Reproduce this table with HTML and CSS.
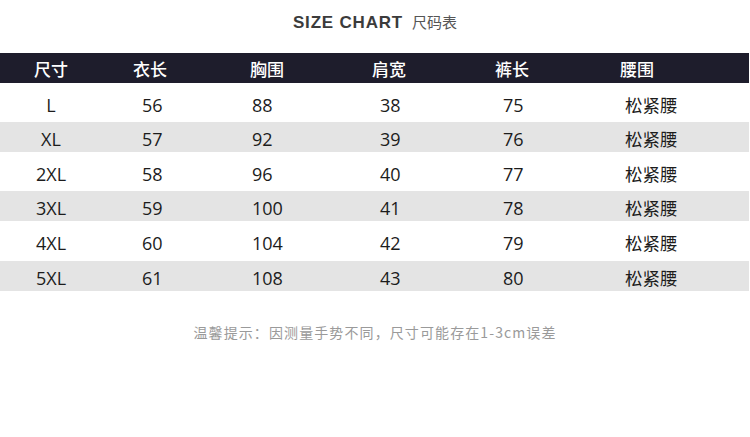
FILE: index.html
```html
<!DOCTYPE html>
<html lang="zh">
<head>
<meta charset="utf-8">
<link rel="stylesheet" href="styles.css">
</head>
<body>
<div class="page">
  <h1 class="title"><span class="title-en">SIZE CHART</span><span class="title-cn">尺码表</span></h1>
  <div class="chart">
    <div class="row head">
      <div class="c c1">尺寸</div><div class="c c2">衣长</div><div class="c c3">胸围</div><div class="c c4">肩宽</div><div class="c c5">裤长</div><div class="c c6">腰围</div>
    </div>
    <div class="row tall">
      <div class="c c1">L</div><div class="c c2">56</div><div class="c c3">88</div><div class="c c4">38</div><div class="c c5">75</div><div class="c c6">松紧腰</div>
    </div>
    <div class="row alt">
      <div class="c c1">XL</div><div class="c c2">57</div><div class="c c3">92</div><div class="c c4">39</div><div class="c c5">76</div><div class="c c6">松紧腰</div>
    </div>
    <div class="row tall">
      <div class="c c1">2XL</div><div class="c c2">58</div><div class="c c3">96</div><div class="c c4">40</div><div class="c c5">77</div><div class="c c6">松紧腰</div>
    </div>
    <div class="row alt">
      <div class="c c1">3XL</div><div class="c c2">59</div><div class="c c3">100</div><div class="c c4">41</div><div class="c c5">78</div><div class="c c6">松紧腰</div>
    </div>
    <div class="row tall taller">
      <div class="c c1">4XL</div><div class="c c2">60</div><div class="c c3">104</div><div class="c c4">42</div><div class="c c5">79</div><div class="c c6">松紧腰</div>
    </div>
    <div class="row alt">
      <div class="c c1">5XL</div><div class="c c2">61</div><div class="c c3">108</div><div class="c c4">43</div><div class="c c5">80</div><div class="c c6">松紧腰</div>
    </div>
  </div>
  <p class="note">温馨提示：因测量手势不同，尺寸可能存在1-3cm误差</p>
</div>
</body>
</html>
```

FILE: styles.css
```css
* { box-sizing: border-box; }
html, body { margin: 0; padding: 0; background: #ffffff; }
body {
  width: 750px;
  height: 437px;
  overflow: hidden;
  font-family: "Open Sans", "Noto Sans CJK SC", sans-serif;
  color: #1c1c1c;
}
.page { display: flex; flex-direction: column; }
.title {
  margin: 0;
  height: 53px;
  padding-top: 10px;
  display: flex;
  justify-content: center;
  align-items: baseline;
  gap: 9px;
  font-weight: normal;
  line-height: 24px;
}
.title-en {
  font-family: "Liberation Sans", Arial, sans-serif;
  font-weight: bold;
  font-size: 17px;
  letter-spacing: 0.8px;
  color: #3b3b3b;
}
.title-cn {
  font-family: "Noto Sans CJK SC", sans-serif;
  font-size: 15px;
  color: #555555;
}
.chart { display: flex; flex-direction: column; }
.row {
  display: grid;
  grid-template-columns: 102px 148px 122px 123px 125px 1fr;
  align-items: center;
  height: 30px;
  font-size: 18px;
  padding-top: 4px;
  width: 749px;
}
.row.head {
  background: #1e1d2c;
  color: #ffffff;
  font-family: "Noto Sans CJK SC", sans-serif;
  font-weight: 500;
  font-size: 17px;
  height: 30px;
  padding-top: 1px;
}
.row.tall { height: 39px; }
.row.taller { height: 40px; }
.row.alt { background: #e4e4e4; }
.c { line-height: 22px; white-space: nowrap; }
.c1 { text-align: center; }
.c2 { padding-left: 40px; }
.c3 { padding-left: 2px; }
.c4 { padding-left: 8px; }
.c5 { padding-left: 8px; }
.c6 { padding-left: 5px; font-family: "Noto Sans CJK SC", sans-serif; font-size: 17.5px; }
.head .c2 { padding-left: 31px; }
.head .c3 { padding-left: 0; }
.head .c4 { padding-left: 0; }
.head .c5 { padding-left: 0; }
.head .c6 { padding-left: 0; font-size: 17px; }
.note {
  margin: 32px 0 0;
  text-align: center;
  font-family: "Noto Sans CJK SC", sans-serif;
  font-size: 14px;
  letter-spacing: 1.1px;
  color: #9a9a9a;
  line-height: 18px;
}
```
